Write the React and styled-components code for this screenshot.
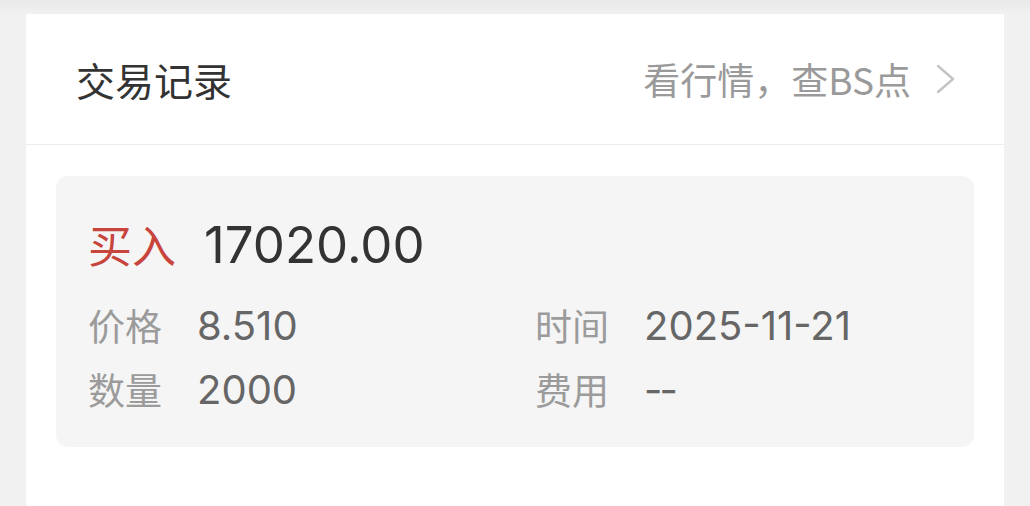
import React from "react";
import styled, { createGlobalStyle } from "styled-components";

const GlobalStyle = createGlobalStyle`
  html, body { margin: 0; padding: 0; }
  body {
    background: #f1f1f1;
    font-family: "Noto Sans CJK SC", "Noto Sans", sans-serif;
    overflow: hidden;
  }
`;

const Page = styled.div`
  width: 1030px;
  height: 506px;
  box-sizing: border-box;
  padding: 14px 26px 0 26px;
  background: linear-gradient(to bottom, #e9e9e9 0px, #f1f1f1 14px);
  display: flex;
  flex-direction: column;
`;

const Card = styled.section`
  flex: 1;
  background: #ffffff;
  display: flex;
  flex-direction: column;
`;

const Header = styled.header`
  height: 131px;
  box-sizing: border-box;
  padding: 0 47px 0 50px;
  border-bottom: 1px solid #ededed;
  display: flex;
  align-items: center;
  justify-content: space-between;
`;

const Title = styled.h2`
  margin: 0;
  font-size: 39px;
  font-weight: 400;
  color: #333333;
`;

const Link = styled.div`
  display: flex;
  align-items: center;
  gap: 24px;
  font-size: 37px;
  color: #9a9a9a;
`;

const Body = styled.div`
  padding: 31px 30px 30px 30px;
`;

const TradeBox = styled.div`
  background: #f5f5f5;
  border-radius: 12px;
  padding: 40px 32px 26px 32px;
`;

const TradeHead = styled.div`
  height: 56px;
  display: flex;
  align-items: center;
  gap: 28px;
  margin-bottom: 21px;
`;

const Side = styled.span`
  font-size: 44px;
  color: ${(p) => (p.$buy ? "#c8453e" : "#2a9d5a")};
`;

const Amount = styled.span`
  font-family: "Inter", "Roboto", sans-serif;
  font-size: 51px;
  color: #333333;
`;

const Grid = styled.div`
  display: grid;
  grid-template-columns: 447px 1fr;
  grid-auto-rows: 64px;
`;

const Field = styled.div`
  display: flex;
  align-items: center;
`;

const Label = styled.span`
  width: 109px;
  flex: none;
  font-size: 37px;
  color: #9b9b9b;
`;

const Value = styled.span`
  font-family: "Inter", "Roboto", sans-serif;
  font-size: 40px;
  color: #666666;
  letter-spacing: ${(p) => (p.$empty ? "-3px" : "0")};
`;

const Chevron = () => (
  <svg width="22" height="30" viewBox="0 0 22 30" fill="none">
    <path d="M3 2 L18 15 L3 28" stroke="#c4c4c4" strokeWidth="2.4" strokeLinecap="round" strokeLinejoin="round" />
  </svg>
);

const fields = [
  { label: "价格", value: "8.510" },
  { label: "时间", value: "2025-11-21" },
  { label: "数量", value: "2000" },
  { label: "费用", value: "--" },
];

export default function App() {
  return (
    <>
      <GlobalStyle />
      <Page>
        <Card>
          <Header>
            <Title>交易记录</Title>
            <Link>
              <span>看行情，查BS点</span>
              <Chevron />
            </Link>
          </Header>
          <Body>
            <TradeBox>
              <TradeHead>
                <Side $buy>买入</Side>
                <Amount>17020.00</Amount>
              </TradeHead>
              <Grid>
                {fields.map((f) => (
                  <Field key={f.label}>
                    <Label>{f.label}</Label>
                    <Value $empty={f.value === "--"}>{f.value}</Value>
                  </Field>
                ))}
              </Grid>
            </TradeBox>
          </Body>
        </Card>
      </Page>
    </>
  );
}
